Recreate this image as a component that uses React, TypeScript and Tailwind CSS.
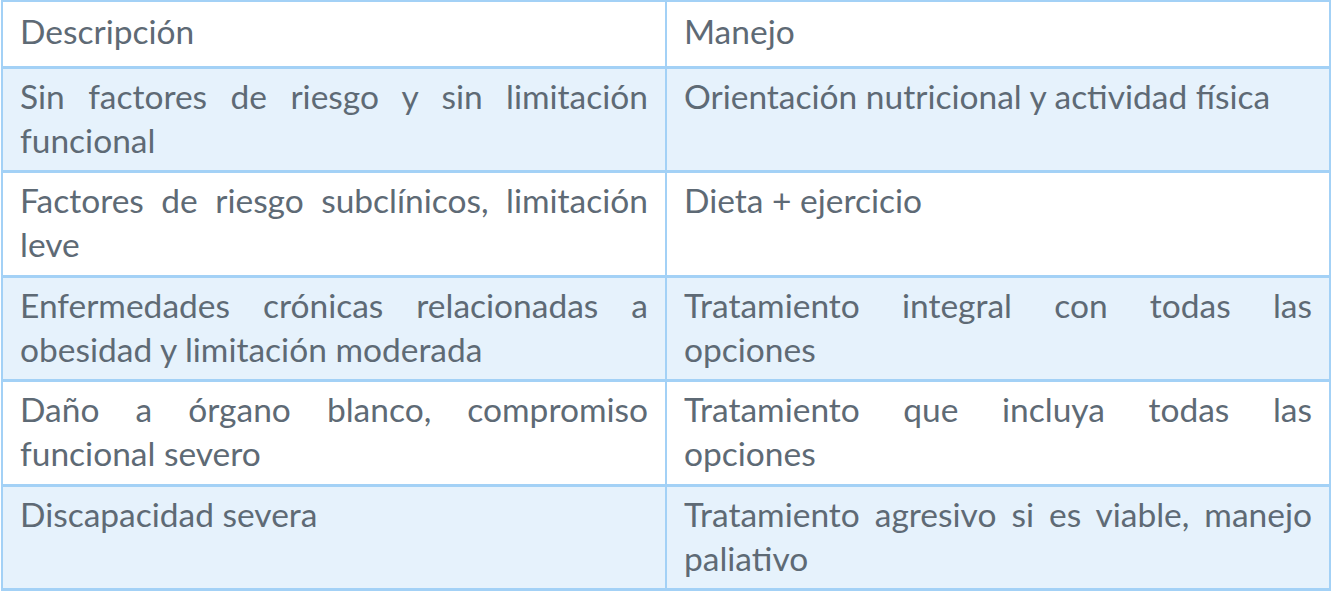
const rows = [
  {
    description: "Sin factores de riesgo y sin limitación funcional",
    management: "Orientación nutricional y actividad física",
  },
  {
    description: "Factores de riesgo subclínicos, limitación leve",
    management: "Dieta + ejercicio",
  },
  {
    description: "Enfermedades crónicas relacionadas a obesidad y limitación moderada",
    management: "Tratamiento integral con todas las opciones",
  },
  {
    description: "Daño a órgano blanco, compromiso funcional severo",
    management: "Tratamiento que incluya todas las opciones",
  },
  {
    description: "Discapacidad severa",
    management: "Tratamiento agresivo si es viable, manejo paliativo",
  },
];

export default function App() {
  return (
    <div className="min-h-[596px] bg-white pl-px">
      <table
        className="w-[1330px] table-fixed border-collapse text-[33.5px] leading-[44px] text-[#5e6a75]"
        style={{ fontFamily: "Lato, 'Open Sans', sans-serif" }}
      >
        <colgroup>
          <col className="w-[664px]" />
          <col />
        </colgroup>
        <thead>
          <tr className="h-[66px] bg-white">
            <th className="border-x-2 border-t-2 border-b-[3px] border-[#a3d1f6] px-[17px] pb-[6px] text-left align-middle font-normal">
              Descripción
            </th>
            <th className="border-x-2 border-t-2 border-b-[3px] border-[#a3d1f6] px-[17px] pb-[6px] text-left align-middle font-normal">
              Manejo
            </th>
          </tr>
        </thead>
        <tbody>
          {rows.map((row, i) => (
            <tr key={row.description} className={`h-[104.6px] ${i % 2 === 0 ? "bg-[#e6f2fc]" : "bg-white"}`}>
              <td className="border-x-2 border-y-[3px] border-[#a3d1f6] px-[17px] pb-[7px] pt-[5px] text-justify align-top">
                {row.description}
              </td>
              <td className="border-x-2 border-y-[3px] border-[#a3d1f6] px-[17px] pb-[7px] pt-[5px] text-justify align-top">
                {row.management}
              </td>
            </tr>
          ))}
        </tbody>
      </table>
    </div>
  );
}
